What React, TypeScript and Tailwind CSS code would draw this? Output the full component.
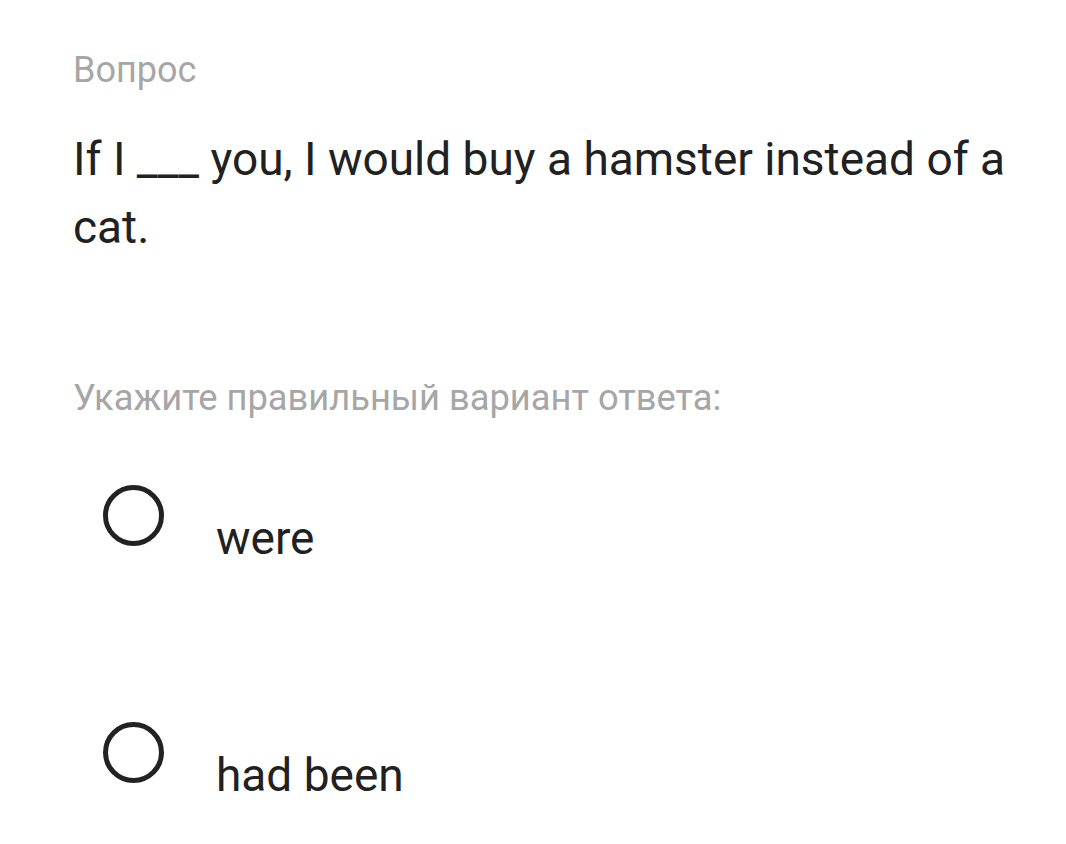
export default function App() {
  const options = ['were', 'had been'];
  return (
    <div className="min-h-screen bg-white pl-[73px] pr-[30px] pt-[48px]" style={{ fontFamily: 'Roboto, sans-serif' }}>
      <div className="text-[36px] leading-[44px] text-[#a6a6a6]">Вопрос</div>
      <div className="mt-[33px] text-[46px] leading-[68px] text-[#212121]">
        If I ___ you, I would buy a hamster instead of a cat.
      </div>
      <div className="mt-[115px] text-[36.3px] leading-[44px] text-[#a6a6a6]">Укажите правильный вариант ответа:</div>
      <div className="mt-[65px] flex flex-col gap-[164px] pl-[30px]">
        {options.map((o) => (
          <div key={o} className="flex items-start">
            <div className="h-[61px] w-[61px] rounded-full border-[5px] border-[#222]" />
            <span className="ml-[52px] mt-[33px] text-[46px] leading-[40px] text-[#212121]">{o}</span>
          </div>
        ))}
      </div>
    </div>
  );
}
